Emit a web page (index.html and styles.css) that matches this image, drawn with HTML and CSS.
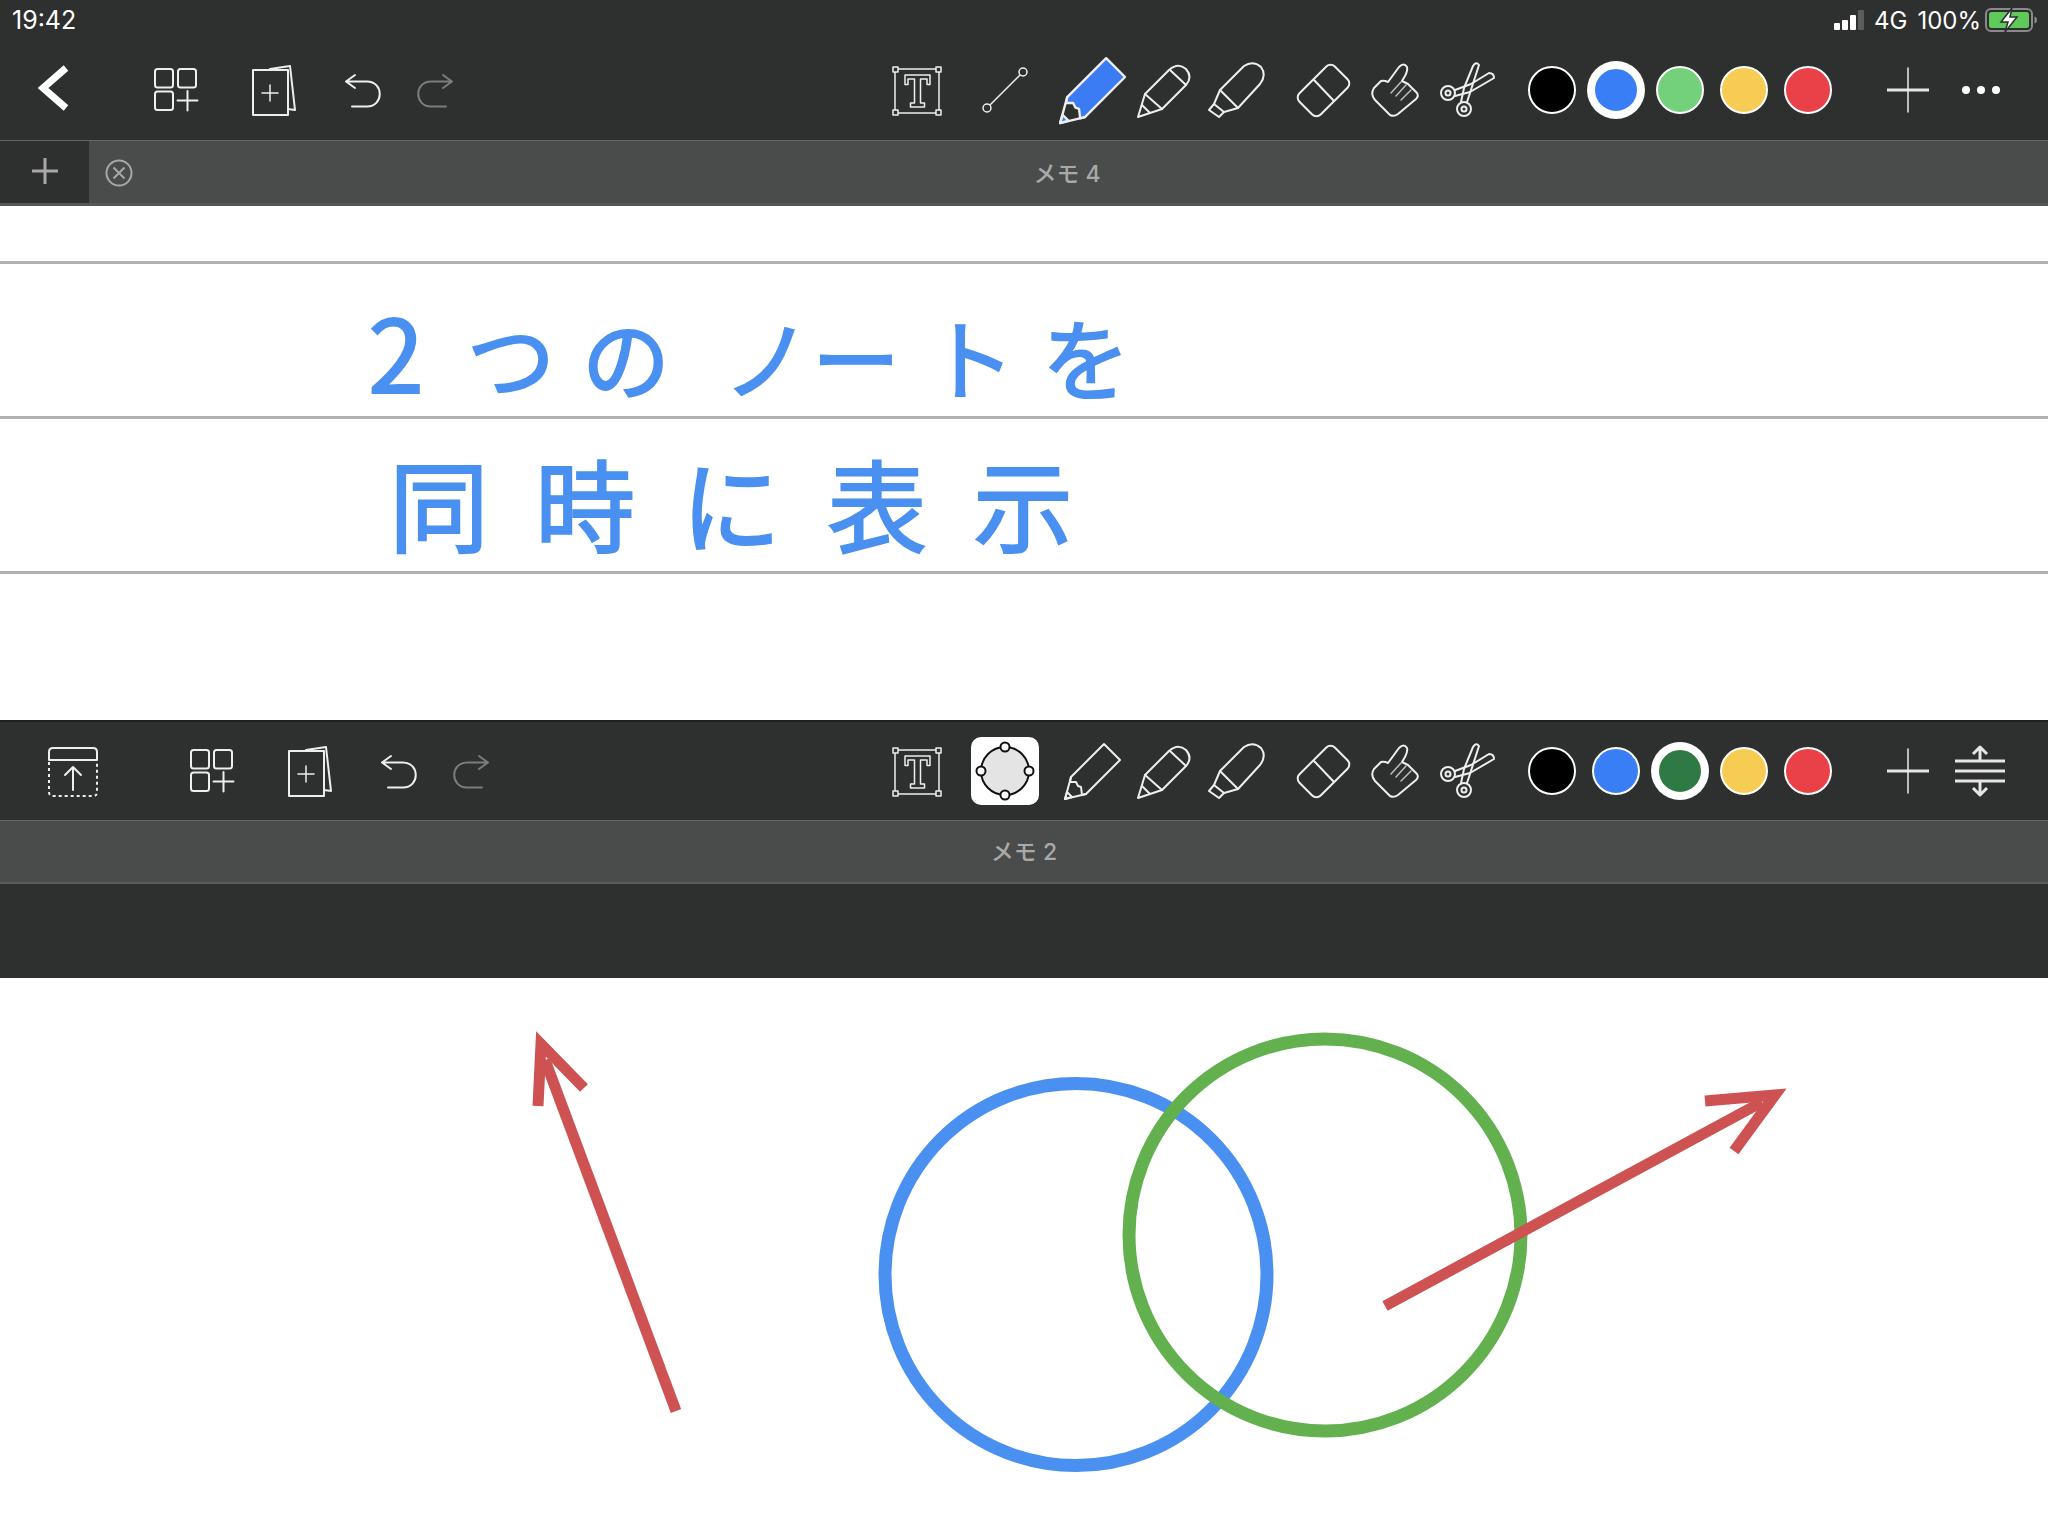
FILE: index.html
```html
<!DOCTYPE html>
<html lang="ja">
<head>
  <meta charset="UTF-8">
  <title>メモ</title>
  <meta name="viewport" content="width=device-width, initial-scale=1.0">
  <link rel="stylesheet" href="styles.css">
</head>
<body>
  <svg class="defs" aria-hidden="true">
    <symbol id="i-grid" viewBox="144.5 58 64 64">
      <rect x="155.5" y="69" width="18" height="18.5" rx="2.5"/>
      <rect x="178.5" y="69" width="18" height="18.5" rx="2.5"/>
      <rect x="155.5" y="91.5" width="18" height="18.5" rx="2.5"/>
      <path d="M178 100.5H198M188 91V110.5"/>
    </symbol>
    <symbol id="i-page" viewBox="242 58 64 64">
      <rect x="253" y="70" width="35" height="45"/>
      <path d="M270 69L290 66L295 110L288 109"/>
      <path class="thin" d="M262 93H278M270 85V101"/>
    </symbol>
    <symbol id="i-undo" viewBox="330 58 64 64">
      <path d="M355 75L346 81.5L355 88M346 81.5H367C384 81.5 384 106.5 367 106.5H352"/>
    </symbol>
    <symbol id="i-redo" viewBox="402 58 64 64">
      <path d="M443 75L452 81.5L443 88M452 81.5H431C414 81.5 414 106.5 431 106.5H446"/>
    </symbol>
    <symbol id="i-text" viewBox="885 58 64 64">
      <rect class="thin" x="894" y="69" width="44" height="44"/>
      <rect class="thin handle" x="892" y="67" width="5" height="5"/>
      <rect class="thin handle" x="935" y="67" width="5" height="5"/>
      <rect class="thin handle" x="892" y="110" width="5" height="5"/>
      <rect class="thin handle" x="935" y="110" width="5" height="5"/>
      <path class="thin" d="M904 75H929V84.5H926V79H919.5V103H923.5V107H909.5V103H913.5V79H907V84.5H904Z"/>
    </symbol>
    <symbol id="i-line" viewBox="972 58 64 64">
      <path class="thin" d="M989 105L1019 75"/>
      <circle class="thin" cx="986" cy="108" r="4"/>
      <circle class="thin" cx="1022" cy="72" r="4"/>
    </symbol>
    <symbol id="i-pen" viewBox="1060 58 64 64">
      <path class="pen-fill" d="M1070 101L1071 96L1104 63L1120 79L1086 113L1082 114L1081 106L1078 105L1076 101Z"/>
      <path class="pen-fill" d="M1065 118L1067 111L1072 116Z"/>
      <path class="pen-edge" d="M1071 96L1065 118L1086 113"/>
    </symbol>
    <symbol id="i-pencil" viewBox="1132 58 64 64">
      <path d="M1138 117L1145 94L1169 70Q1178 62 1186 69Q1193 77 1186 85L1162 109Z"/>
      <path d="M1145 94L1162 109M1170 70L1186 85M1142 105L1150 113"/>
    </symbol>
    <symbol id="i-marker" viewBox="1205 58 64 64">
      <path d="M1220 90L1244 66Q1253 60 1261 67Q1267 75 1260 84L1238 108L1224 112L1219 117L1209 110L1214 104Z"/>
      <path d="M1220 90L1238 108M1214 104L1224 112"/>
    </symbol>
    <symbol id="i-eraser" viewBox="1293 58 64 64">
      <rect x="1299.5" y="75.5" width="50" height="30" rx="6" transform="rotate(-45 1324.5 90.5)"/>
      <path d="M1315 80L1335 101"/>
    </symbol>
    <symbol id="i-hand" viewBox="1365 58 64 64">
      <path d="M1389 82L1400 67Q1405 62 1408 67Q1409 70 1406 76L1403 81L1409 84L1413 88L1418 93Q1420 96 1417 99L1399 114Q1395 117 1391 115L1376 100Q1371 94 1375 88L1382 81Q1385 80 1389 82Z"/>
      <path class="thin faint" d="M1392 93L1402 82M1397 96L1407 85M1402 100L1412 90"/>
    </symbol>
    <symbol id="i-scissors" viewBox="1437 58 64 64">
      <circle cx="1449" cy="93" r="7"/>
      <circle cx="1449" cy="93" r="2.5"/>
      <circle cx="1465" cy="109" r="7"/>
      <circle cx="1465" cy="109" r="2.5"/>
      <path d="M1462 102L1465 88L1474 66Q1477 61 1480 65L1470 96L1468 102"/>
      <path d="M1456 90L1472 84L1490 73Q1495 73 1495 78L1471 92L1456 96"/>
    </symbol>
    <symbol id="i-plus" viewBox="1876 58 64 64">
      <path class="cross" d="M1887 90H1929"/>
      <path class="thin" d="M1908 68V112"/>
    </symbol>
    <symbol id="i-expand" viewBox="1949 58 64 64">
      <path class="cross" d="M1955 80H2005M1955 90H2005M1955 100H2005"/>
      <path class="cross" d="M1980 66V80M1973 73L1980 66L1987 73M1980 100V114M1973 107L1980 114L1987 107"/>
    </symbol>
  </svg>

  <section class="pane">
    <div class="status">
      <span class="clock">19:42</span>
      <div class="status-right">
        <div class="signal"><i></i><i></i><i></i><i class="off"></i></div>
        <span>4G</span>
        <span>100%</span>
        <svg class="battery" viewBox="0 0 53 26">
          <rect x="1" y="2" width="46" height="22" rx="5" fill="none" stroke="#8a8a8a" stroke-width="2"/>
          <rect x="4" y="5" width="40" height="16" rx="2.5" fill="#5fc95a"/>
          <path d="M49.5 9.5Q52 10 52 13Q52 16 49.5 16.500Z" fill="#8a8a8a"/>
          <path d="M27 1L16 15H23L20 25L32 10H25Z" fill="#fff" stroke="#2e2f2f" stroke-width="1.500"/>
        </svg>
      </div>
    </div>
    <div class="toolbar">
      <svg class="tool back" viewBox="22 58 64 64"><path d="M66 68L43 88L66 108"/></svg>
      <svg class="tool"><use href="#i-grid"/></svg>
      <svg class="tool next-page"><use href="#i-page"/></svg>
      <svg class="tool next-undo"><use href="#i-undo"/></svg>
      <svg class="tool dim"><use href="#i-redo"/></svg>
      <div class="tools-right">
        <svg class="tool"><use href="#i-text"/></svg>
        <svg class="tool wide"><use href="#i-line"/></svg>
        <svg class="tool wide pen-on"><use href="#i-pen"/></svg>
        <svg class="tool"><use href="#i-pencil"/></svg>
        <svg class="tool nudge"><use href="#i-marker"/></svg>
        <svg class="tool wide"><use href="#i-eraser"/></svg>
        <svg class="tool"><use href="#i-hand"/></svg>
        <svg class="tool"><use href="#i-scissors"/></svg>
        <div class="swatches">
          <span class="swatch black"></span>
          <span class="swatch blue on"></span>
          <span class="swatch green"></span>
          <span class="swatch yellow"></span>
          <span class="swatch red"></span>
        </div>
        <svg class="tool add"><use href="#i-plus"/></svg>
        <div class="dots"><i></i><i></i><i></i></div>
      </div>
    </div>
    <div class="tabbar">
      <div class="tab-add">
        <svg class="tab-icon" viewBox="0 0 28 28"><path d="M1 14H27M14 1V27"/></svg>
      </div>
      <svg class="tab-icon tab-close" viewBox="0 0 28 28">
        <circle cx="14" cy="14" r="12.500"/>
        <path d="M8.500 8.500L19.500 19.500M19.500 8.500L8.500 19.500"/>
      </svg>
      <span class="tab-title">メモ 4</span>
    </div>
  </section>

  <section class="note">
    <div class="rule first"></div>
    <div class="rule ink"><span class="digit">2</span>つの<span class="push">ノ</span>ートを</div>
    <div class="rule ink second">同時に表示</div>
  </section>

  <section class="pane">
    <div class="toolbar lower">
      <svg class="tool upload" viewBox="41 739 64 64">
        <path d="M49 760V752Q49 748 53 748H93Q97 748 97 752V760Z"/>
        <path class="dashed" d="M49 762V792Q49 796 53 796H93Q97 796 97 792V762"/>
        <path d="M73 790V767M65 775L73 767L81 775"/>
      </svg>
      <svg class="tool"><use href="#i-grid"/></svg>
      <svg class="tool next-page"><use href="#i-page"/></svg>
      <svg class="tool next-undo"><use href="#i-undo"/></svg>
      <svg class="tool dim"><use href="#i-redo"/></svg>
      <div class="tools-right">
        <svg class="tool"><use href="#i-text"/></svg>
        <svg class="tool-shape" viewBox="0 0 68 68">
          <ellipse cx="34" cy="34" rx="24" ry="24" fill="#e4e4e4" stroke="#111" stroke-width="2"/>
          <circle cx="34" cy="10" r="4.500"/>
          <circle cx="34" cy="58" r="4.500"/>
          <circle cx="10" cy="34" r="4.500"/>
          <circle cx="58" cy="34" r="4.500"/>
        </svg>
        <svg class="tool after-shape"><use href="#i-pen"/></svg>
        <svg class="tool"><use href="#i-pencil"/></svg>
        <svg class="tool nudge"><use href="#i-marker"/></svg>
        <svg class="tool wide"><use href="#i-eraser"/></svg>
        <svg class="tool"><use href="#i-hand"/></svg>
        <svg class="tool"><use href="#i-scissors"/></svg>
        <div class="swatches">
          <span class="swatch black"></span>
          <span class="swatch blue"></span>
          <span class="swatch dark-green on"></span>
          <span class="swatch yellow"></span>
          <span class="swatch red"></span>
        </div>
        <svg class="tool add"><use href="#i-plus"/></svg>
        <svg class="tool expand"><use href="#i-expand"/></svg>
      </div>
    </div>
    <div class="tabbar">
      <span class="tab-title">メモ 2</span>
    </div>
    <div class="gutter"></div>
  </section>

  <svg class="canvas" viewBox="0 978 2048 558">
    <circle cx="1076" cy="1274.500" r="191" stroke="#4a90f0"/>
    <circle cx="1325" cy="1235" r="196" stroke="#62b04e"/>
    <g class="arrow">
      <path d="M676 1411L545 1060"/>
      <path d="M538 1106L541 1044L584 1088"/>
      <path d="M1385 1306L1762 1102"/>
      <path d="M1705 1101L1775 1095L1734 1151"/>
    </g>
  </svg>
</body>
</html>
```

FILE: styles.css
```css
* {
  box-sizing: border-box;
}
body {
  margin: 0;
  width: 2048px;
  height: 1536px;
  overflow: hidden;
  background: white;
  font-family: 'Inter', 'Noto Sans CJK JP', sans-serif;
}
.defs {
  display: none;
}
.pane {
  background: #2e2f2f;
}

/* status bar */
.status {
  height: 40px;
  padding: 0 10px 0 12px;
  display: flex;
  justify-content: space-between;
  align-items: center;
  color: white;
  font-size: 24px;
}
.clock {
  font-size: 25px;
}
.status-right {
  display: flex;
  align-items: center;
  gap: 10px;
}
.signal {
  display: flex;
  align-items: flex-end;
  gap: 2px;
  height: 20px;
}
.signal i {
  width: 6px;
  background: white;
  border-radius: 1px;
}
.signal i:nth-child(1) { height: 7px; }
.signal i:nth-child(2) { height: 10px; }
.signal i:nth-child(3) { height: 15px; }
.signal i:nth-child(4) { height: 20px; }
.signal .off {
  background: #5c5c5c;
}
.battery {
  width: 53px;
  height: 26px;
  margin-left: -6px;
}

/* toolbars */
.toolbar {
  height: 100px;
  padding-left: 22px;
  display: flex;
  align-items: center;
}
.lower {
  border-top: 2px solid #1f2020;
}
.tool {
  width: 64px;
  height: 64px;
  flex: none;
  fill: none;
  stroke: #eeeeee;
  stroke-width: 2;
  stroke-linejoin: round;
  stroke-linecap: round;
  overflow: visible;
}
.thin {
  stroke-width: 1.5;
}
.faint {
  stroke: #bdbdbd;
}
.handle {
  fill: #2e2f2f;
}
.dim {
  stroke: #7c7c7c;
  margin-left: 8px;
}
.back {
  stroke: white;
  stroke-width: 7;
  stroke-linecap: butt;
  stroke-linejoin: miter;
  margin-right: 58px;
}
.upload {
  margin-left: 19px;
  margin-right: 75px;
}
.dashed {
  stroke-dasharray: 3 3;
  stroke-linecap: butt;
}
.next-page {
  margin-left: 34px;
}
.next-undo {
  margin-left: 24px;
}
.tools-right {
  margin-left: auto;
  padding-right: 35px;
  display: flex;
  align-items: center;
}
.tools-right .tool + .tool {
  margin-left: 8px;
}
.tools-right .tool.nudge {
  margin-left: 9px;
}
.tools-right .tool.wide {
  margin-left: 23px;
}
.tools-right .tool.add {
  margin-left: 44px;
}
.tools-right .tool.expand {
  margin-left: 9px;
}
.pen-on {
  transform: scale(1.18);
  fill: #3b7cf4;
}
.pen-edge {
  fill: none;
}
.tool-shape {
  width: 68px;
  height: 68px;
  flex: none;
  margin-left: 21px;
  background: white;
  border-radius: 10px;
  fill: white;
  stroke: #111;
  stroke-width: 2;
}
.tools-right .tool.after-shape {
  margin-left: 21px;
}
.cross {
  stroke-width: 3;
  stroke-linecap: butt;
  stroke: #e6e6e6;
}
.expand .cross {
  stroke-linecap: round;
}

/* colour swatches */
.swatches {
  display: flex;
  gap: 16px;
  margin-left: 28px;
}
.swatch {
  width: 48px;
  height: 48px;
  border: 2px solid white;
  border-radius: 50%;
}
.swatch.on {
  box-shadow: 0 0 0 5px white;
  border-width: 3px;
}
.black { background: #000; }
.blue { background: #3a7ef5; }
.green { background: #72d17a; }
.dark-green { background: #2f7a44; }
.yellow { background: #f6cc52; }
.red { background: #ea4047; }

.dots {
  width: 64px;
  margin-left: 9px;
  display: flex;
  justify-content: center;
  gap: 7px;
}
.dots i {
  width: 8px;
  height: 8px;
  border-radius: 50%;
  background: white;
}

/* tab bars */
.tabbar {
  height: 66px;
  background: #4a4b4b;
  border-top: 1px solid #666;
  border-bottom: 3px solid #565656;
  display: flex;
  align-items: center;
}
.lower + .tabbar {
  height: 64px;
  padding-bottom: 4px;
  border-bottom: 2px solid #5a5a5a;
}
.tab-add {
  width: 89px;
  height: 100%;
  padding-bottom: 2px;
  background: #2e2f2f;
  display: flex;
  justify-content: center;
  align-items: center;
}
.tab-icon {
  width: 28px;
  height: 28px;
  fill: none;
  stroke: #a8a8a8;
  stroke-width: 3;
}
.tab-close {
  margin: 1px 0 0 16px;
  stroke-width: 2;
}
.tab-title {
  flex: 1;
  padding-right: 47px;
  text-align: center;
  color: #a9a9a9;
  font-size: 23px;
  font-weight: 500;
}
.lower + .tabbar .tab-title {
  padding-right: 0;
}
.gutter {
  height: 94px;
}

/* handwritten note */
.note {
  height: 514px;
  background: white;
}
.rule {
  border-bottom: 3px solid #b2b2b2;
}
.first {
  height: 58px;
}
.ink {
  height: 155px;
  padding: 21px 0 0 352px;
  color: #4a90f0;
  font-family: 'Noto Sans CJK JP', sans-serif;
  font-size: 88px;
  line-height: 129px;
  letter-spacing: 27px;
  white-space: nowrap;
  -webkit-text-stroke: 2px #4a90f0;
}
.digit {
  display: inline-block;
  width: 88px;
  margin-right: 27px;
  text-align: center;
  letter-spacing: 0;
  font-size: 100px;
}
.push {
  margin-left: 26px;
  letter-spacing: 1px;
}
.second {
  padding: 18px 0 0 389px;
  font-size: 100px;
  letter-spacing: 46px;
}

/* shapes on the lower note */
.canvas {
  display: block;
  width: 2048px;
  height: 558px;
}
.canvas circle {
  fill: none;
  stroke-width: 13;
}
.arrow {
  fill: none;
  stroke: #cf5253;
  stroke-width: 11;
  stroke-miterlimit: 10;
}
```
